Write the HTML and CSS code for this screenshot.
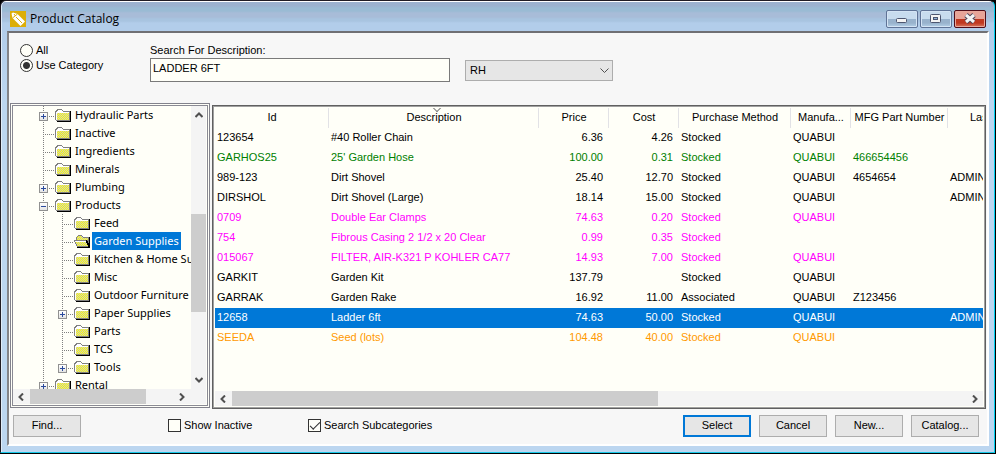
FILE: index.html
```
<!DOCTYPE html>
<html lang="en">
	<head>
		<meta charset="utf-8">
		<title>Product Catalog</title>
		<link rel="stylesheet" href="styles.css">
	</head>
	<body>
		<svg class="defs" aria-hidden="true">
			<defs>
				<pattern id="dither" width="2" height="2" patternUnits="userSpaceOnUse">
					<rect width="2" height="2" fill="#c8c8c8"/>
					<rect width="1" height="1" fill="#ffff00"/>
					<rect x="1" y="1" width="1" height="1" fill="#ffff00"/>
				</pattern>
				<symbol id="folder" viewBox="0 0 16 14">
					<path d="M2 13h13V3h1v11H2z" fill="#000"/>
					<path d="M0 3h1V2h1V1h5v1h1v1h7v10H1V12H0z" fill="#808080"/>
					<path d="M1 4h1V3h1V2h4v1h1v1h6v8H1z" fill="#fff"/>
					<path d="M2 5h12v7H2z" fill="url(#dither)"/>
				</symbol>
				<symbol id="folder-open" viewBox="0 0 16 14">
					<path d="M3 13h12V3h1v11H3z" fill="#000"/>
					<path d="M2 3h1V2h1V1h4v1h1v1h6v10H3V12H2V10H1V8H0V6h2z" fill="#808080"/>
					<path d="M3 3h1V2h4v1h1v1h5v2H3z" fill="url(#dither)"/>
					<path d="M1 7h11v1H1z" fill="#fff"/>
					<path d="M2 8h10v1h1v2h1v1H3v-2H2z" fill="url(#dither)"/>
					<path d="M12 6h1v1h1v2h1v4h-1v-2h-1V9h-1z" fill="#000"/>
				</symbol>
				<symbol id="chev-left" viewBox="0 0 8 8">
					<path d="M6 0.5L2.5 4L6 7.5" fill="none" stroke="#505050" stroke-width="2"/>
				</symbol>
				<symbol id="chev-right" viewBox="0 0 8 8">
					<path d="M2 0.5L5.5 4L2 7.5" fill="none" stroke="#505050" stroke-width="2"/>
				</symbol>
				<symbol id="chev-up" viewBox="0 0 8 8">
					<path d="M0.5 6L4 2.5L7.5 6" fill="none" stroke="#505050" stroke-width="2"/>
				</symbol>
				<symbol id="chev-down" viewBox="0 0 8 8">
					<path d="M0.5 2L4 5.5L7.5 2" fill="none" stroke="#505050" stroke-width="2"/>
				</symbol>
				<symbol id="chev-thin" viewBox="0 0 9 9">
					<path d="M0.5 2.5L4.5 6.5L8.5 2.5" fill="none" stroke="#505050"/>
				</symbol>
			</defs>
		</svg>

		<div class="window">
			<header class="titlebar">
				<svg class="app-icon" viewBox="0 0 16 16">
					<rect width="16" height="16" fill="#dcae08"/>
					<path d="M1.500 2.500L3 1.500L7.500 3L15 10.500L10.500 15L2.500 7z" fill="#fff"/>
					<path d="M2.500 7L7.500 3M4 3l1.500 2M6 6l6 6" stroke="#dcae08" fill="none"/>
				</svg>
				<h1>Product Catalog</h1>
				<div class="win-buttons">
					<button type="button" aria-label="Minimize">
						<svg viewBox="0 0 30 16"><rect x="9.500" y="7.500" width="10" height="4" rx="1" fill="#f4f4f4" stroke="#4d5670"/></svg>
					</button>
					<button type="button" aria-label="Maximize">
						<svg viewBox="0 0 30 16"><rect x="9.500" y="3.500" width="10" height="8" rx="1" fill="#f4f4f4" stroke="#4d5670"/><rect x="12.500" y="6.500" width="4" height="2" fill="#8fb2d8" stroke="#4d5670"/></svg>
					</button>
					<button type="button" class="close" aria-label="Close">
						<svg viewBox="0 0 30 16"><path d="M11 4l8 7M19 4l-8 7" stroke="#4d4558" stroke-width="5"/><path d="M11 4l8 7M19 4l-8 7" stroke="#f4f4f4" stroke-width="3"/></svg>
					</button>
				</div>
			</header>

			<main class="panel">
				<form class="search">
					<div class="scope">
						<label><input type="radio" name="scope" value="all">All</label>
						<label><input type="radio" name="scope" value="category" checked>Use Category</label>
					</div>
					<div class="field">
						<label for="descr">Search For Description:</label>
						<input type="text" id="descr" value="LADDER 6FT">
					</div>
					<div class="location">
						<select aria-label="Location">
							<option>RH</option>
						</select>
						<svg class="chev"><use href="#chev-thin"/></svg>
					</div>
				</form>

				<div class="split">
					<nav class="tree-box">
						<ul class="tree">
							<li><div class="row"><span class="stem"><i class="plus"></i></span><svg><use href="#folder"/></svg><span class="name">Hydraulic Parts</span></div></li>
							<li><div class="row"><span class="stem"></span><svg><use href="#folder"/></svg><span class="name">Inactive</span></div></li>
							<li><div class="row"><span class="stem"></span><svg><use href="#folder"/></svg><span class="name">Ingredients</span></div></li>
							<li><div class="row"><span class="stem"></span><svg><use href="#folder"/></svg><span class="name">Minerals</span></div></li>
							<li><div class="row"><span class="stem"><i class="plus"></i></span><svg><use href="#folder"/></svg><span class="name">Plumbing</span></div></li>
							<li>
								<div class="row"><span class="stem"><i class="minus"></i></span><svg><use href="#folder"/></svg><span class="name">Products</span></div>
								<ul>
									<li><div class="row"><span class="bar"></span><span class="stem"></span><svg><use href="#folder"/></svg><span class="name">Feed</span></div></li>
									<li><div class="row selected"><span class="bar"></span><span class="stem"></span><svg><use href="#folder-open"/></svg><span class="name">Garden Supplies</span></div></li>
									<li><div class="row"><span class="bar"></span><span class="stem"></span><svg><use href="#folder"/></svg><span class="name">Kitchen &amp; Home Supplies</span></div></li>
									<li><div class="row"><span class="bar"></span><span class="stem"></span><svg><use href="#folder"/></svg><span class="name">Misc</span></div></li>
									<li><div class="row"><span class="bar"></span><span class="stem"></span><svg><use href="#folder"/></svg><span class="name">Outdoor Furniture</span></div></li>
									<li><div class="row"><span class="bar"></span><span class="stem"><i class="plus"></i></span><svg><use href="#folder"/></svg><span class="name">Paper Supplies</span></div></li>
									<li><div class="row"><span class="bar"></span><span class="stem"></span><svg><use href="#folder"/></svg><span class="name">Parts</span></div></li>
									<li><div class="row"><span class="bar"></span><span class="stem"></span><svg><use href="#folder"/></svg><span class="name">TCS</span></div></li>
									<li><div class="row"><span class="bar"></span><span class="stem last"><i class="plus"></i></span><svg><use href="#folder"/></svg><span class="name">Tools</span></div></li>
								</ul>
							</li>
							<li><div class="row"><span class="stem"><i class="plus"></i></span><svg><use href="#folder"/></svg><span class="name">Rental</span></div></li>
						</ul>
						<div class="vscroll">
							<svg class="chev"><use href="#chev-up"/></svg>
							<div class="track"><div class="thumb"></div></div>
							<svg class="chev"><use href="#chev-down"/></svg>
						</div>
						<div class="hscroll">
							<svg class="chev"><use href="#chev-left"/></svg>
							<div class="track"><div class="thumb"></div></div>
							<svg class="chev"><use href="#chev-right"/></svg>
						</div>
					</nav>

					<section class="grid-box">
						<div class="grid">
							<table>
								<colgroup>
									<col class="c-id"><col class="c-desc"><col class="c-num"><col class="c-num"><col class="c-method"><col class="c-manu"><col class="c-mfg"><col class="c-last">
								</colgroup>
								<thead>
									<tr><th>Id</th><th class="sorted">Description</th><th>Price</th><th>Cost</th><th>Purchase Method</th><th>Manufa...</th><th>MFG Part Number</th><th>Last User</th></tr>
								</thead>
								<tbody>
									<tr><td>123654</td><td>#40 Roller Chain</td><td class="num">6.36</td><td class="num">4.26</td><td>Stocked</td><td>QUABUI</td><td></td><td></td></tr>
									<tr class="green"><td>GARHOS25</td><td>25' Garden Hose</td><td class="num">100.00</td><td class="num">0.31</td><td>Stocked</td><td>QUABUI</td><td>466654456</td><td></td></tr>
									<tr><td>989-123</td><td>Dirt Shovel</td><td class="num">25.40</td><td class="num">12.70</td><td>Stocked</td><td>QUABUI</td><td>4654654</td><td>ADMIN</td></tr>
									<tr><td>DIRSHOL</td><td>Dirt Shovel (Large)</td><td class="num">18.14</td><td class="num">15.00</td><td>Stocked</td><td>QUABUI</td><td></td><td>ADMIN</td></tr>
									<tr class="pink"><td>0709</td><td>Double Ear Clamps</td><td class="num">74.63</td><td class="num">0.20</td><td>Stocked</td><td>QUABUI</td><td></td><td></td></tr>
									<tr class="pink"><td>754</td><td>Fibrous Casing 2 1/2 x 20 Clear</td><td class="num">0.99</td><td class="num">0.35</td><td>Stocked</td><td></td><td></td><td></td></tr>
									<tr class="pink"><td>015067</td><td>FILTER, AIR-K321 P KOHLER CA77</td><td class="num">14.93</td><td class="num">7.00</td><td>Stocked</td><td>QUABUI</td><td></td><td></td></tr>
									<tr><td>GARKIT</td><td>Garden Kit</td><td class="num">137.79</td><td class="num"></td><td>Stocked</td><td>QUABUI</td><td></td><td></td></tr>
									<tr><td>GARRAK</td><td>Garden Rake</td><td class="num">16.92</td><td class="num">11.00</td><td>Associated</td><td>QUABUI</td><td>Z123456</td><td></td></tr>
									<tr class="active"><td>12658</td><td>Ladder 6ft</td><td class="num">74.63</td><td class="num">50.00</td><td>Stocked</td><td>QUABUI</td><td></td><td>ADMIN</td></tr>
									<tr class="orange"><td>SEEDA</td><td>Seed (lots)</td><td class="num">104.48</td><td class="num">40.00</td><td>Stocked</td><td>QUABUI</td><td></td><td></td></tr>
								</tbody>
							</table>
						</div>
						<div class="hscroll">
							<svg class="chev"><use href="#chev-left"/></svg>
							<div class="track"><div class="thumb"></div></div>
							<svg class="chev"><use href="#chev-right"/></svg>
						</div>
					</section>
				</div>

				<footer class="actions">
					<button type="button">Find...</button>
					<div class="checks">
						<label><input type="checkbox">Show Inactive</label>
						<label><input type="checkbox" checked>Search Subcategories</label>
					</div>
					<div class="commands">
						<button type="button" class="default">Select</button>
						<button type="button">Cancel</button>
						<button type="button">New...</button>
						<button type="button">Catalog...</button>
					</div>
				</footer>
			</main>
		</div>
	</body>
</html>
```
FILE: styles.css
```
*{
	box-sizing: border-box;
}
body{
	display: flex;
	flex-direction: column;
	height: 100vh;
	margin: 0;
	padding: 0 1px 1px 0;
	background-color: #000;
	color: #000;
	font: 11px/15px "Liberation Sans", Arial, sans-serif;
}
button, input, select{
	font: inherit;
	color: inherit;
}
.defs{
	position: absolute;
	width: 0;
	height: 0;
}
.window{
	flex: 1;
	display: flex;
	flex-direction: column;
	min-height: 0;
	padding: 0 5px 6px 6px;
	border: 1px solid #201c24;
	border-right-color: #00d0f0;
	border-bottom: 1px solid #18c8e8;
	border-radius: 6px 6px 0 0;
	background: linear-gradient(#fff 0 1px, #9cb2cf 1px 5px, #9abbd4 7px 10px, #a8bcd8 12px 16px, #a8c4e0 18px 20px, #b2cdea 22px 30px, #bcd6f0 100px);
	box-shadow: inset 1px 0 #e0ecf8;
}

/* title bar */
.titlebar{
	display: flex;
	align-items: center;
	height: 30px;
	padding: 6px 3px 0 3px;
}
.app-icon{
	width: 16px;
	height: 16px;
}
.titlebar h1{
	flex: 1;
	margin: 0 0 0 4px;
	font: 12px/18px "Open Sans", "Noto Sans", sans-serif;
}
.win-buttons{
	display: flex;
	gap: 2px;
}
.win-buttons button{
	width: 32px;
	height: 18px;
	padding: 0;
	border: 1px solid #5f7396;
	border-radius: 2px;
	background: linear-gradient(#c8dcee 0 8px, #98b2cc 8px 12px, #b4d0e8);
	box-shadow: inset 0 0 0 1px #d4e4f4;
}
.win-buttons svg{
	display: block;
	width: 30px;
	height: 16px;
}
.win-buttons .close{
	border-color: #500c18;
	background: linear-gradient(#e8a498 0 8px, #c03820 8px 12px, #d87860);
	box-shadow: inset 0 0 0 1px #e8a89c;
}

.panel{
	flex: 1;
	display: flex;
	flex-direction: column;
	min-height: 0;
	border: 2px solid #fff;
	border-top-color: #707074;
	border-left-color: #848488;
	background-color: #f7f7f7;
}

/* search bar */
.search{
	display: flex;
	height: 70px;
	padding: 10px 11px 0 11px;
}
.scope{
	width: 130px;
}
.scope label, .checks label{
	display: flex;
	align-items: center;
	gap: 3px;
}
.scope input{
	appearance: none;
	width: 13px;
	height: 13px;
	margin: 0;
	border: 1px solid #333;
	border-radius: 50%;
	background-color: #fffff8;
}
.scope input:checked{
	background: radial-gradient(#333 0 3px, #fffff8 4px);
}
.field{
	flex: 0 1 300px;
}
.field label{
	display: block;
}
.field input{
	display: block;
	width: 100%;
	height: 24px;
	padding: 0 2px 4px;
	border: 1px solid #7a7a7a;
	background-color: #fffff8;
}
.location{
	position: relative;
	flex: 0 1 148px;
	margin: 17px 0 0 15px;
}
.location select{
	appearance: none;
	width: 100%;
	height: 21px;
	padding: 0 4px;
	border: 1px solid #adadad;
	border-radius: 0;
	background-color: #e6e6e6;
}
.chev{
	display: block;
	width: 8px;
	height: 8px;
}
.location .chev{
	position: absolute;
	top: 6px;
	right: 4px;
	width: 9px;
	height: 9px;
}

.split{
	flex: 1;
	display: flex;
	gap: 2px;
	min-height: 0;
	padding: 0 1px;
}

/* category tree */
.tree-box{
	display: grid;
	grid-template-columns: 1fr 15px;
	grid-template-rows: 1fr 15px;
	flex: 0 0 200px;
	margin-bottom: 1px;
	padding: 2px 3px 3px 2px;
	border: 1px solid #82828c;
	outline: 1px solid #8a8a94;
	outline-offset: -3px;
	background-color: #fffff8;
}
.tree{
	min-height: 0;
	overflow: hidden;
	font: 11px/18px "Noto Sans", sans-serif;
}
.tree, .tree ul{
	margin: 0;
	padding: 0;
	list-style: none;
}
.row{
	display: flex;
	height: 18px;
	padding-left: 26px;
	white-space: nowrap;
}
.row svg{
	flex: none;
	width: 16px;
	height: 14px;
	margin: 2px 2px 0 0;
}
.name{
	padding: 0 2px;
}
.selected .name{
	background-color: #0078d7;
	color: #fff;
}
.bar, .stem{
	flex: none;
	height: 18px;
	background: repeating-linear-gradient(#808080 0 1px, transparent 1px 2px) 4px 0 / 1px 18px no-repeat;
}
.bar{
	width: 19px;
}
.stem{
	width: 16px;
	padding-top: 6px;
	background:
		repeating-linear-gradient(#808080 0 1px, transparent 1px 2px) 4px 0 / 1px 18px no-repeat,
		repeating-linear-gradient(90deg, #808080 0 1px, transparent 1px 2px) 4px 10px / 12px 1px no-repeat;
}
.stem.last{
	background-size: 1px 10px, 12px 1px;
}
.plus, .minus{
	display: block;
	width: 9px;
	height: 9px;
	border: 1px solid #919191;
	background: linear-gradient(#2a4a9c, #2a4a9c) 1px 3px / 5px 1px no-repeat, linear-gradient(#fff, #e4e4e4);
}
.plus{
	background: linear-gradient(#2a4a9c, #2a4a9c) 1px 3px / 5px 1px no-repeat, linear-gradient(#2a4a9c, #2a4a9c) 3px 1px / 1px 5px no-repeat, linear-gradient(#fff, #e4e4e4);
}

/* scroll bars */
.hscroll, .vscroll{
	display: flex;
	align-items: center;
	background-color: #f4f4f4;
}
.vscroll{
	flex-direction: column;
	padding: 5px 0;
}
.hscroll{
	height: 15px;
	padding: 0 4px;
}
.track{
	display: flex;
	flex: 1;
}
.thumb{
	background-color: #cdcdcd;
}
.tree-box .hscroll{
	grid-column: 1 / 3;
	padding-right: 20px;
}
.tree-box .hscroll .track{
	padding: 0 5px;
}
.tree-box .hscroll .thumb{
	width: 81%;
	height: 15px;
}
.vscroll .track{
	flex-direction: column;
	width: 15px;
}
.vscroll .thumb{
	height: 38%;
	margin-top: 95px;
}

/* product list */
.grid-box{
	flex: 1;
	display: flex;
	flex-direction: column;
	min-width: 0;
	margin-top: 2px;
	border: 1px solid #606060;
	outline: 1px solid #a0a0a0;
	outline-offset: -2px;
	padding: 2px;
	background-color: #fffff8;
}
.grid{
	flex: 1;
	min-height: 0;
	overflow: hidden;
}
.grid-box table{
	width: 100%;
	min-width: 824px;
	table-layout: fixed;
	border-collapse: collapse;
}
.c-id{
	width: 114px;
}
.c-desc{
	width: 210px;
}
.c-num{
	width: 70px;
}
.c-method{
	width: 112px;
}
.c-manu{
	width: 60px;
}
.c-mfg{
	width: 97px;
}
th, td{
	height: 20px;
	padding: 0 2px 2px;
	line-height: 18px;
	white-space: nowrap;
}
th{
	font-weight: normal;
	text-align: center;
	background: linear-gradient(#e2e2e6, #e2e2e6) right / 1px 20px no-repeat;
}
.sorted{
	position: relative;
}
.sorted::before{
	content: "";
	position: absolute;
	top: -3px;
	left: 50%;
	width: 5px;
	height: 5px;
	border: 1px solid #808080;
	border-width: 0 1px 1px 0;
	transform: rotate(45deg);
}
td{
	text-align: left;
}
.num{
	padding-right: 6px;
	text-align: right;
}
.green{
	color: #008000;
}
.pink{
	color: #ff00ff;
}
.orange{
	color: #ff9900;
}
.active{
	background-color: #0078d7;
	color: #fff;
}
.grid-box .track{
	padding: 0 5px;
}
.grid-box .thumb{
	width: 58%;
	height: 15px;
}

/* bottom buttons */
.actions{
	display: flex;
	align-items: center;
	height: 35px;
	padding: 0 8px 2px 4px;
}
.actions button{
	width: 68px;
	height: 22px;
	padding: 0;
	border: 1px solid #adadad;
	background-color: #e6e6e6;
}
.actions .default{
	border: 2px solid #0078d7;
}
.checks{
	flex: 1;
	display: flex;
	margin-left: 87px;
}
.checks label{
	width: 140px;
	white-space: nowrap;
}
.checks input{
	appearance: none;
	width: 13px;
	height: 13px;
	margin: 0;
	border: 1px solid #333;
	background-color: #fffff8;
}
.checks input:checked::before{
	content: "";
	display: block;
	width: 9px;
	height: 4px;
	margin: 2px 1px;
	border: 1px solid #333;
	border-width: 0 0 1px 1px;
	transform: rotate(-45deg);
}
.commands{
	display: flex;
	gap: 8px;
}
```
